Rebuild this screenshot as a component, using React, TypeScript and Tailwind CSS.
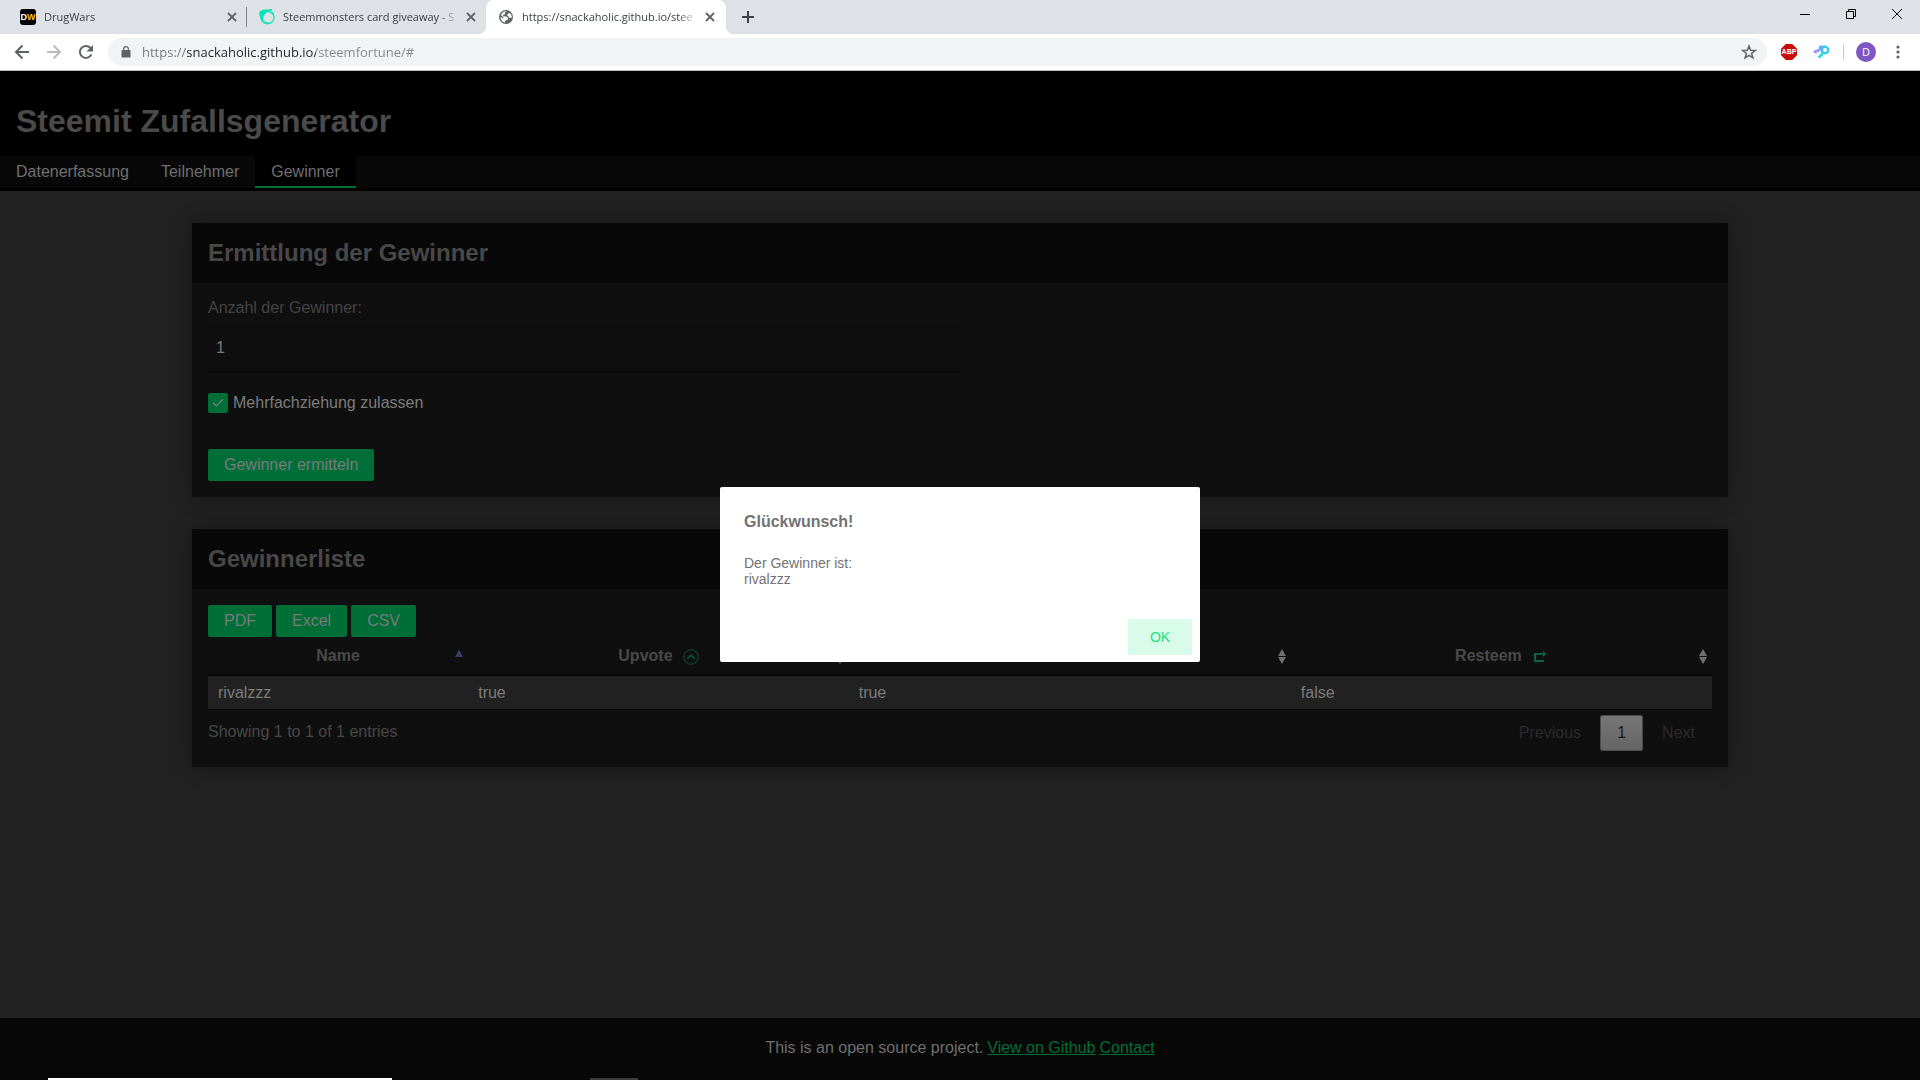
import type { ReactNode } from 'react';
import { Check } from 'lucide-react';

const browserTabs = [
    { title: 'DrugWars', icon: 'drugwars' },
    { title: 'Steemmonsters card giveaway - S', icon: 'steem' },
    { title: 'https://snackaholic.github.io/stee', icon: 'globe' },
];

const navItems = ['Datenerfassung', 'Teilnehmer', 'Gewinner'];

const winners = [{ name: 'rivalzzz', upvote: 'true', comment: 'true', resteem: 'false' }];

function TabIcon({ icon }: { icon: string }) {
    if (icon === 'drugwars') {
        return (
            <span className="flex size-4 shrink-0 items-center justify-center rounded-[3px] bg-black font-['Liberation_Sans'] text-[9px] leading-4 font-bold text-white">
                D<span className="text-[#fdc500]">W</span>
            </span>
        );
    }
    if (icon === 'steem') {
        return (
            <svg className="size-4 shrink-0" viewBox="0 0 16 16">
                <path
                    d="M8.500 1a7.200 7.200 0 1 1 0 14.400A7.200 7.200 0 0 1 8.500 1zM9.500 3.800a5 5 0 1 0 0 10 5 5 0 0 0 0-10z"
                    fill="#06e0b6"
                    fillRule="evenodd"
                />
                <path d="M.600 2.800C2.500.800 5.500.200 8.500.600L13.500 0 12 2.600C8.500 2.800 5 5 4.600 10.500 1.500 10-.600 6.500.600 2.800z" fill="#06e0b6" />
                <path d="M12.500 2.900C8.500 2.300 4.300 5 4.400 10.200c.100 1.300.600 2.300 1.200 3.200" fill="none" stroke="#dee1e6" strokeWidth=".700" />
            </svg>
        );
    }
    return (
        <svg className="size-4 shrink-0" viewBox="0 0 16 16">
            <circle cx="8" cy="8" r="7" fill="#5f6368" />
            <path d="M9 2.300 6.800 3.600l.300 1.600-2 .600v1.500l3.400.300 1.600 1.300-.300 1.800-2.400.800-.400 2.300C3.800 13 2.300 10.600 2.500 7.800l2.700 1.700.100-1.500-2.300-1.800C3.800 3.500 6.200 2 9 2.300z" fill="#fff" />
            <path d="M10.200 4.600l2.300-.300 1.300 3-.200 1.500-2.300-.100-1.200-1.600-1.100-.900z" fill="#fff" />
        </svg>
    );
}

function CloseGlyph() {
    return (
        <svg className="size-4" viewBox="0 0 16 16" stroke="#5f6368" strokeWidth="1.800">
            <path d="M4 4l8 8M12 4l-8 8" />
        </svg>
    );
}

function TabStrip() {
    return (
        <div className="flex h-[34px] bg-[#dee1e6] pl-2">
            {browserTabs.map((tab, i) => {
                const active = i === 2;
                return (
                    <div
                        className={
                            active
                                ? 'relative flex w-60 items-center rounded-t-lg bg-white pl-3'
                                : 'relative flex w-[239px] items-center pl-3'
                        }
                        key={tab.title}
                    >
                        <TabIcon icon={tab.icon} />
                        <span className="ml-2 w-44 overflow-hidden font-['Open_Sans',sans-serif] text-[11px] leading-4 whitespace-nowrap text-[#3c4043] [mask-image:linear-gradient(90deg,#000_156px,transparent_176px)]">
                            {tab.title}
                        </span>
                        <button className="ml-1" aria-label="Close tab">
                            <CloseGlyph />
                        </button>
                        {i === 0 && <span className="absolute top-[7px] right-0 h-5 w-px bg-[#80868b]" />}
                        {active && (
                            <>
                                <span className="absolute bottom-0 -left-2 size-2 bg-[radial-gradient(circle_at_0_0,transparent_8px,#fff_8px)]" />
                                <span className="absolute -right-2 bottom-0 size-2 bg-[radial-gradient(circle_at_100%_0,transparent_8px,#fff_8px)]" />
                            </>
                        )}
                    </div>
                );
            })}
            <button className="ml-3 flex w-5 items-center justify-center" aria-label="New tab">
                <svg className="size-3" viewBox="0 0 12 12" stroke="#3c4043" strokeWidth="2">
                    <path d="M6 0v12M0 6h12" />
                </svg>
            </button>
            <div className="ml-auto flex h-7">
                <button className="flex w-[46px] items-center justify-center" aria-label="Minimize">
                    <span className="h-px w-2.5 bg-black" />
                </button>
                <button className="flex w-[46px] items-center justify-center" aria-label="Restore">
                    <svg className="size-2.5" viewBox="0 0 10 10" fill="none" stroke="#000">
                        <path d="M.5 2.500h7v7h-7zM2.500 2.500v-2h7v7h-2" />
                    </svg>
                </button>
                <button className="flex w-[46px] items-center justify-center" aria-label="Close">
                    <svg className="size-2.5" viewBox="0 0 10 10" stroke="#000">
                        <path d="M0 0l10 10M10 0L0 10" />
                    </svg>
                </button>
            </div>
        </div>
    );
}

function ToolButton({ label, children }: { label: string; children: ReactNode }) {
    return (
        <button className="flex size-7 shrink-0 items-center justify-center" aria-label={label}>
            {children}
        </button>
    );
}

function Toolbar() {
    return (
        <div className="flex h-[37px] items-center border-b border-[#b6bcb8] bg-white px-2">
            <div className="flex gap-1">
                <ToolButton label="Back">
                    <svg className="size-4" viewBox="0 0 16 16" fill="none" stroke="#5f6368" strokeWidth="2">
                        <path d="M15 8H2M8.500 1.500 2 8l6.500 6.500" />
                    </svg>
                </ToolButton>
                <ToolButton label="Forward">
                    <svg className="size-4" viewBox="0 0 16 16" fill="none" stroke="#babcbe" strokeWidth="2">
                        <path d="M1 8h13M7.500 1.500 14 8l-6.500 6.500" />
                    </svg>
                </ToolButton>
                <ToolButton label="Reload">
                    <svg className="size-4" viewBox="0 0 16 16" fill="none">
                        <path d="M13.400 10.300A6 6 0 1 1 12.300 3.800L14 5.500" stroke="#5f6368" strokeWidth="2" />
                        <path d="M15 1v6.500H8.500z" fill="#5f6368" />
                    </svg>
                </ToolButton>
            </div>
            <div className="mr-2 ml-2 flex h-7 grow items-center rounded-full bg-[#f1f3f4] pr-2.5 pl-3">
                <svg className="size-3" viewBox="0 0 12 12">
                    <path d="M2.500 4h7c.6 0 1 .4 1 1v5.500c0 .6-.4 1-1 1h-7c-.6 0-1-.4-1-1V5c0-.6.4-1 1-1z" fill="#5f6368" />
                    <path d="M3.700 5V3a2.300 2.300 0 0 1 4.600 0v2" fill="none" stroke="#5f6368" strokeWidth="1.200" />
                </svg>
                <input
                    className="ml-2.5 grow bg-[linear-gradient(90deg,#70757a_45px,#202124_45px,#202124_174px,#80868b_174px)] bg-clip-text font-['Open_Sans',sans-serif] text-[13px] leading-5 text-transparent outline-none"
                    aria-label="Address"
                    type="text"
                    defaultValue="https://snackaholic.github.io/steemfortune/#"
                />
                <button aria-label="Bookmark">
                    <svg className="size-4" viewBox="0 0 16 16" fill="none" stroke="#5f6368" strokeWidth="1.500">
                        <path d="M8 2l1.600 4.300 4.600.2-3.600 2.900 1.300 4.400L8 11.300l-3.900 2.500 1.300-4.400L1.800 6.500l4.600-.2z" />
                    </svg>
                </button>
            </div>
            <ToolButton label="Adblock Plus">
                <span className="flex size-4 items-center justify-center bg-[#c70d0d] font-['Liberation_Sans'] text-[7px] leading-4 font-bold text-white [clip-path:polygon(30%_0,70%_0,100%_30%,100%_70%,70%_100%,30%_100%,0_70%,0_30%)]">
                    ABP
                </span>
            </ToolButton>
            <div className="w-1" />
            <ToolButton label="Keychain">
                <svg className="h-4 w-[18px]" viewBox="0 0 18 16" fill="none">
                    <path d="M1.500 8 9 5" stroke="#9c93f6" strokeWidth="2" />
                    <path d="M3.500 7.500l.700 2.200M6 6.500l.600 2" stroke="#9c93f6" strokeWidth="1.500" />
                    <circle cx="9.500" cy="4" r="2.800" fill="#86a4f4" />
                    <path d="M11.500 8 6.500 13.500" stroke="#2cdadb" strokeWidth="2" />
                    <path d="M9 10.500l1.800 1.700M7 12.500l1.500 1.500" stroke="#2cdadb" strokeWidth="1.500" />
                    <circle cx="13" cy="6" r="3.200" fill="#fff" stroke="#35c8e8" strokeWidth="2.400" />
                </svg>
            </ToolButton>
            <span className="mr-3 ml-2 h-4 w-px bg-[#c6c9cc]" />
            <button className="size-5 rounded-full bg-[#7e57c2] font-['Open_Sans',sans-serif] text-[11px] leading-5 text-white">D</button>
            <div className="w-2" />
            <ToolButton label="Menu">
                <svg className="size-4" viewBox="0 0 16 16" fill="#5f6368">
                    <circle cx="8" cy="3" r="1.600" />
                    <circle cx="8" cy="8" r="1.600" />
                    <circle cx="8" cy="13" r="1.600" />
                </svg>
            </ToolButton>
        </div>
    );
}

function Card({ title, children }: { title: string; children: ReactNode }) {
    return (
        <section className="mx-auto mt-8 w-4/5 bg-[#0f0f0f] shadow-[0_0_20px_rgba(0,0,0,0.3)]">
            <h2 className="bg-[#080808] px-4 py-4 text-2xl leading-7 font-bold text-[#484848]">{title}</h2>
            <div className="p-4">{children}</div>
        </section>
    );
}

function GreenButton({ children }: { children: ReactNode }) {
    return <button className="h-8 rounded-xs bg-[#006e37] px-4 text-[#7a7a7a]">{children}</button>;
}

function SortIcon({ sorted = false }: { sorted?: boolean }) {
    if (sorted) {
        return (
            <svg className="absolute top-3 right-1 h-4 w-2.5" viewBox="0 0 10 16">
                <path d="M5 .500 9 8H1z" fill="#3b3a69" />
            </svg>
        );
    }
    return (
        <svg className="absolute top-3 right-1 h-4 w-2.5" viewBox="0 0 10 16" fill="#707070">
            <path d="M5 0l4 7H1zM1 8h8l-4 7z" />
        </svg>
    );
}

function HeadCell({ width, sorted, children }: { width: string; sorted?: boolean; children: ReactNode }) {
    return (
        <th className={width + ' relative h-[39px] border-b border-black px-[18px] font-bold text-[#4a4a4a]'}>
            <span className="inline-flex items-center">{children}</span>
            <SortIcon sorted={sorted} />
        </th>
    );
}

function WinnerTable() {
    return (
        <table className="w-full table-fixed border-separate border-spacing-0 text-left">
            <thead>
                <tr className="text-center">
                    <HeadCell width="w-[17.300%]" sorted>
                        Name
                    </HeadCell>
                    <HeadCell width="w-[25.300%]">
                        Upvote
                        <svg className="mt-0.5 ml-2.5 size-4" viewBox="0 0 16 16" fill="none" stroke="#09553b">
                            <circle cx="8" cy="8" r="7.200" />
                            <path d="M4.300 9.800 8 6.200l3.700 3.600" strokeWidth="1.700" />
                        </svg>
                    </HeadCell>
                    <HeadCell width="w-[29.400%]">
                        Comment
                        <svg className="mt-0.5 ml-2.5 size-4" viewBox="0 0 16 16" fill="#09553b">
                            <path d="M2 2h12v8H8l-3 3v-3H2z" />
                        </svg>
                    </HeadCell>
                    <HeadCell width="w-[28%]">
                        Resteem
                        <svg className="mt-0.5 ml-2.5 size-4" viewBox="0 0 16 16">
                            <path d="M12 5H3v7h9" fill="none" stroke="#0a6344" strokeWidth="2" />
                            <path d="M11 2l3.500 3L11 8z" fill="#0a6344" />
                        </svg>
                    </HeadCell>
                </tr>
            </thead>
            <tbody>
                {winners.map((winner) => (
                    <tr className="bg-[#212121] text-[#7c7c7c]" key={winner.name}>
                        {[winner.name, winner.upvote, winner.comment, winner.resteem].map((value, i) => (
                            <td className="h-[34px] border-b border-black px-2.5" key={i}>
                                {value}
                            </td>
                        ))}
                    </tr>
                ))}
            </tbody>
        </table>
    );
}

function WinnerDialog() {
    return (
        <div className="absolute inset-0 flex items-center justify-center">
            <div className="flex h-[175px] w-[480px] flex-col rounded-xs bg-white px-2 pt-2 pb-[7px] text-[#737373]" role="dialog" aria-labelledby="dialog-title">
                <h3 className="px-4 pt-[17px] leading-5 font-bold" id="dialog-title">
                    Glückwunsch!
                </h3>
                <p className="mt-[23px] px-4 text-sm leading-4">
                    Der Gewinner ist:
                    <br />
                    rivalzzz
                </p>
                <button className="mt-auto ml-auto h-9 w-16 bg-[#d9fbe9] text-sm text-[#1de27c]">OK</button>
            </div>
        </div>
    );
}

export default function App() {
    return (
        <div className="flex min-h-screen flex-col bg-[#080808]">
            <TabStrip />
            <Toolbar />
            <div className="relative flex grow flex-col bg-[#212121] font-['Liberation_Sans',Arial,sans-serif] text-base leading-[18px] text-[#6f6f6f]">
                <header className="border-b-[3px] border-black bg-[#080808]">
                    <h1 className="bg-black px-4 pt-8 pb-4 text-[32px] leading-[37px] font-bold text-[#4a4a4a]">Steemit Zufallsgenerator</h1>
                    <nav className="flex">
                        {navItems.map((item) => (
                            <a
                                className={
                                    item === 'Gewinner'
                                        ? 'h-8 border-b-2 border-[#006e37] bg-black px-4 pt-[7px]'
                                        : 'h-8 px-4 pt-[7px]'
                                }
                                href="#"
                                key={item}
                            >
                                {item}
                            </a>
                        ))}
                    </nav>
                </header>

                <main className="grow">
                    <Card title="Ermittlung der Gewinner">
                        <label className="block text-[#444]" htmlFor="winner-count">
                            Anzahl der Gewinner:
                        </label>
                        <input
                            className="mt-2 block h-12 w-1/2 rounded-xs border-b-2 border-[#0a0a0a] bg-[#0e0e0e] px-2 text-[#7c7c7c] outline-none"
                            id="winner-count"
                            type="text"
                            defaultValue="1"
                        />
                        <label className="mt-5 flex h-5 items-center gap-[5px] text-[#7c7c7c]">
                            <span className="relative flex size-5">
                                <input className="size-5 appearance-none rounded-xs bg-[#006e37]" type="checkbox" defaultChecked />
                                <Check className="pointer-events-none absolute top-[3px] left-[3px] size-3.5 text-[#808080]" strokeWidth={2} />
                            </span>
                            Mehrfachziehung zulassen
                        </label>
                        <div className="mt-9 flex">
                            <GreenButton>Gewinner ermitteln</GreenButton>
                        </div>
                    </Card>

                    <Card title="Gewinnerliste">
                        <div className="flex gap-1">
                            <GreenButton>PDF</GreenButton>
                            <GreenButton>Excel</GreenButton>
                            <GreenButton>CSV</GreenButton>
                        </div>
                        <WinnerTable />
                        <div className="flex items-center justify-between pt-[5px]">
                            <p className="pb-0.5 text-[#484848]">Showing 1 to 1 of 1 entries</p>
                            <div className="flex text-[#2b2b2b]">
                                <button className="mr-0.5 h-9 px-[17px]">Previous</button>
                                <button className="h-9 w-[43px] rounded-xs border border-[#4a4a4a] bg-linear-to-b from-[#777] to-[#656565] text-[#1a1a1a]">
                                    1
                                </button>
                                <button className="ml-0.5 h-9 px-[17px]">Next</button>
                            </div>
                        </div>
                    </Card>
                </main>

                <footer className="flex h-[60px] items-center justify-center gap-1 bg-[#080808]">
                    <span>This is an open source project.</span>
                    <a className="text-[#006e37] underline" href="#">
                        View on Github
                    </a>
                    <a className="text-[#006e37] underline" href="#">
                        Contact
                    </a>
                </footer>
                <WinnerDialog />
            </div>
            {/* top edge of the windows behind the taskbar */}
            <div className="flex h-0.5 pl-12">
                <span className="w-[344px] bg-white" />
                <span className="ml-[198px] w-12 bg-[#3a3a3a]" />
            </div>
        </div>
    );
}
